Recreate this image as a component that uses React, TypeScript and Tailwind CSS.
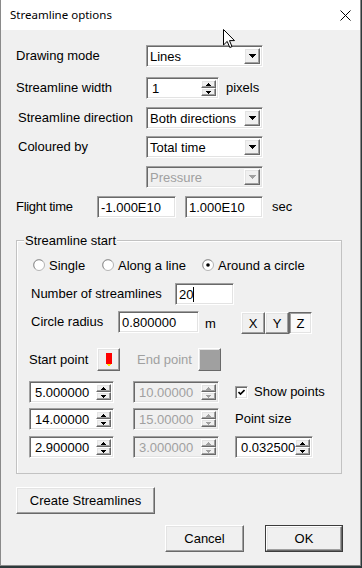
import React from 'react';

const raised =
  'border border-t-white border-l-white border-b-[#696969] border-r-[#696969] shadow-[inset_-1px_-1px_0_#a0a0a0,inset_1px_1px_0_#e3e3e3]';
const sunken =
  'border border-t-[#a0a0a0] border-l-[#a0a0a0] border-b-white border-r-white shadow-[inset_1px_1px_0_#696969,inset_-1px_-1px_0_#e3e3e3]';
const pressed =
  'border border-t-[#696969] border-l-[#696969] border-b-white border-r-white shadow-[inset_1px_1px_0_#a0a0a0,inset_-1px_-1px_0_#e3e3e3]';

function Arrow({ dir, disabled }: { dir: 'up' | 'down'; disabled?: boolean }) {
  const fill = disabled ? '#a0a0a0' : '#000';
  return (
    <svg width="5" height="3" viewBox="0 0 5 3" shapeRendering="crispEdges">
      {dir === 'up' ? <polygon points="2.5,0 5,3 0,3" fill={fill} /> : <polygon points="0,0 5,0 2.5,3" fill={fill} />}
    </svg>
  );
}

function Combo({ value, w, disabled }: { value: string; w: string; disabled?: boolean }) {
  return (
    <div className={`${sunken} ${w} h-[22px] flex p-[2px] ${disabled ? 'bg-[#f0f0f0] text-[#a0a0a0]' : 'bg-white'}`}>
      <div className="flex-1 flex items-center pl-[1px] leading-none">{value}</div>
      <div className={`${raised} w-[16px] bg-[#f0f0f0] flex items-center justify-center`}>
        <svg width="7" height="4" viewBox="0 0 7 4" shapeRendering="crispEdges">
          <polygon points="0,0 7,0 3.5,4" fill={disabled ? '#a0a0a0' : '#000'} />
        </svg>
      </div>
    </div>
  );
}

function Edit({ value, w, caret }: { value: string; w: string; caret?: boolean }) {
  return (
    <div className={`${sunken} ${w} h-[22px] bg-white flex items-center pl-[3px] leading-none`}>
      {value}
      {caret && <span className="w-px h-[15px] bg-black" />}
    </div>
  );
}

function Spin({ value, w, disabled }: { value: string; w: string; disabled?: boolean }) {
  return (
    <div className={`${sunken} ${w} h-[22px] flex p-[2px] ${disabled ? 'bg-[#f0f0f0] text-[#a0a0a0]' : 'bg-white'}`}>
      <div className="flex-1 flex items-center pl-[3px] leading-none">{value}</div>
      <div className="w-[15px] flex flex-col">
        <div className={`${raised} flex-1 bg-[#f0f0f0] flex items-center justify-center`}>
          <Arrow dir="up" disabled={disabled} />
        </div>
        <div className={`${raised} flex-1 bg-[#f0f0f0] flex items-center justify-center`}>
          <Arrow dir="down" disabled={disabled} />
        </div>
      </div>
    </div>
  );
}

function Radio({ label, checked, w }: { label: string; checked?: boolean; w: string }) {
  return (
    <div className={`${w} flex items-center gap-[4px]`}>
      <svg width="12" height="12" viewBox="0 0 12 12">
        <circle cx="6" cy="6" r="5.5" fill="#fff" stroke="#b4b4b4" />
        <path d="M2.3 9.7 A5 5 0 0 1 9.7 2.3" fill="none" stroke="#8c8c8c" strokeWidth="0.8" />
        {checked && <circle cx="6" cy="6" r="1.8" fill="#000" />}
      </svg>
      <span className="leading-none">{label}</span>
    </div>
  );
}

function Button({ label, w, def }: { label: string; w: string; def?: boolean }) {
  const inner = (
    <div className={`${raised} h-full bg-[#f0f0f0] flex items-center justify-center leading-none`}>{label}</div>
  );
  return def ? (
    <div className={`${w} h-[27px] border border-[#3c3c3c]`}>{inner}</div>
  ) : (
    <div className={`${w} h-[27px]`}>{inner}</div>
  );
}

export default function App() {
  return (
    <div className="relative w-[362px] h-[568px] bg-[#2d3a3b] overflow-hidden font-['Liberation_Sans',Arial,sans-serif] text-[13px] text-black">
      <div className="w-[361px] h-[566px] flex flex-col bg-[#f0f0f0] border-x border-b border-[#8a8a8a]">
        {/* title bar */}
        <div className="h-[30px] bg-white flex items-center justify-between pl-[9px] pr-[9px] font-['Noto_Sans',sans-serif] text-[11.5px]">
          <span>Streamline options</span>
          <svg width="11" height="11" viewBox="0 0 11 11">
            <path d="M0.5 0.5 L10.5 10.5 M10.5 0.5 L0.5 10.5" stroke="#000" strokeWidth="1" />
          </svg>
        </div>

        <div className="flex flex-col px-[15px]">
          <div className="mt-[15px] flex items-center">
            <span className="w-[130px]">Drawing mode</span>
            <Combo value="Lines" w="w-[117px]" />
          </div>
          <div className="mt-[10px] flex items-center">
            <span className="w-[130px]">Streamline width</span>
            <Spin value="1" w="w-[73px]" />
            <span className="ml-[7px]">pixels</span>
          </div>
          <div className="mt-[8px] flex items-center">
            <span className="w-[130px] pl-[2px]">Streamline direction</span>
            <Combo value="Both directions" w="w-[117px]" />
          </div>
          <div className="mt-[7px] flex items-center">
            <span className="w-[130px] pl-[2px]">Coloured by</span>
            <Combo value="Total time" w="w-[117px]" />
          </div>
          <div className="mt-[8px] flex items-center">
            <span className="w-[130px]" />
            <Combo value="Pressure" w="w-[117px]" disabled />
          </div>
          <div className="mt-[8px] flex items-center">
            <span className="w-[81px] tracking-[-0.3px]">Flight time</span>
            <Edit value="-1.000E10" w="w-[79px]" />
            <div className="ml-[9px]">
              <Edit value="1.000E10" w="w-[78px]" />
            </div>
            <span className="ml-[9px]">sec</span>
          </div>

          {/* group box */}
          <div className="relative mt-[22px] w-[326px] h-[234px] border border-[#c2c2c2] shadow-[inset_1px_1px_0_#fff] flex flex-col">
            <span className="absolute left-[7px] top-[-8px] px-[1px] bg-[#f0f0f0] leading-[15px]">Streamline start</span>

            <div className="mt-[16px] ml-[16px] h-[16px] flex items-center">
              <Radio label="Single" w="w-[69px]" />
              <Radio label="Along a line" w="w-[100px]" />
              <Radio label="Around a circle" checked w="w-[130px]" />
            </div>

            <div className="mt-[10px] ml-[14px] flex items-center">
              <span className="w-[144px]">Number of streamlines</span>
              <Edit value="20" w="w-[59px]" caret />
            </div>

            <div className="mt-[6px] ml-[14px] flex items-start">
              <div className="h-[22px] flex items-center">
                <span className="w-[87px]">Circle radius</span>
                <Edit value="0.800000" w="w-[81px]" />
                <span className="w-[42px] pl-[6px] pt-[3px]">m</span>
              </div>
              <div className="mt-[1px] flex h-[22px]">
                <div className={`${raised} w-[24px] bg-[#f0f0f0] flex items-center justify-center leading-none`}>X</div>
                <div className={`${raised} w-[24px] bg-[#f0f0f0] flex items-center justify-center leading-none`}>Y</div>
                <div className={`${pressed} w-[23px] bg-[#fafafa] flex items-center justify-center leading-none`}>Z</div>
              </div>
            </div>

            <div className="mt-[14px] ml-[12px] flex items-center">
              <span className="w-[68px]">Start point</span>
              <div className={`${raised} w-[23px] h-[23px] bg-[#f0f0f0] flex items-center justify-center`}>
                <svg width="6" height="14" viewBox="0 0 6 14" shapeRendering="crispEdges">
                  <rect x="0" y="0" width="6" height="11" fill="#ff0000" />
                  <polygon points="1,11 5,11 3,14" fill="#ffe000" />
                </svg>
              </div>
              <span className="ml-[17px] w-[61px] text-[#a0a0a0]">End point</span>
              <div className={`${raised} w-[23px] h-[23px] bg-[#a0a0a0]`} />
            </div>

            <div className="mt-[10px] ml-[12px] flex items-center">
              <Spin value="5.000000" w="w-[85px]" />
              <div className="ml-[19px]">
                <Spin value="10.00000" w="w-[86px]" disabled />
              </div>
              <div className="ml-[16px] flex items-center gap-[6px]">
                <div className={`${sunken} w-[13px] h-[13px] bg-white flex items-center justify-center`}>
                  <svg width="7" height="7" viewBox="0 0 7 7">
                    <path d="M0.5 3 L2.5 5 L6.5 1" fill="none" stroke="#000" strokeWidth="1.6" />
                  </svg>
                </div>
                <span>Show points</span>
              </div>
            </div>

            <div className="mt-[5px] ml-[12px] flex items-center">
              <Spin value="14.00000" w="w-[85px]" />
              <div className="ml-[19px]">
                <Spin value="15.00000" w="w-[86px]" disabled />
              </div>
              <span className="ml-[16px]">Point size</span>
            </div>

            <div className="mt-[6px] ml-[12px] flex items-center">
              <Spin value="2.900000" w="w-[85px]" />
              <div className="ml-[19px]">
                <Spin value="3.000000" w="w-[86px]" disabled />
              </div>
              <div className="ml-[16px]">
                <Spin value="0.032500" w="w-[78px]" />
              </div>
            </div>
          </div>

          <div className="mt-[13px]">
            <Button label="Create Streamlines" w="w-[139px]" />
          </div>

          <div className="mt-[11px] pl-[149px] flex gap-[21px]">
            <Button label="Cancel" w="w-[79px]" />
            <Button label="OK" w="w-[78px]" def />
          </div>
        </div>
      </div>

      {/* mouse pointer */}
      <svg className="absolute left-[223px] top-[29px]" width="13" height="20" viewBox="0 0 13 20">
        <path d="M0.5 0.5 L0.5 16 L4.2 12.4 L6.8 18.5 L9 17.6 L6.5 11.6 L11.5 11.6 Z" fill="#fff" stroke="#000" strokeWidth="1" />
      </svg>
    </div>
  );
}
